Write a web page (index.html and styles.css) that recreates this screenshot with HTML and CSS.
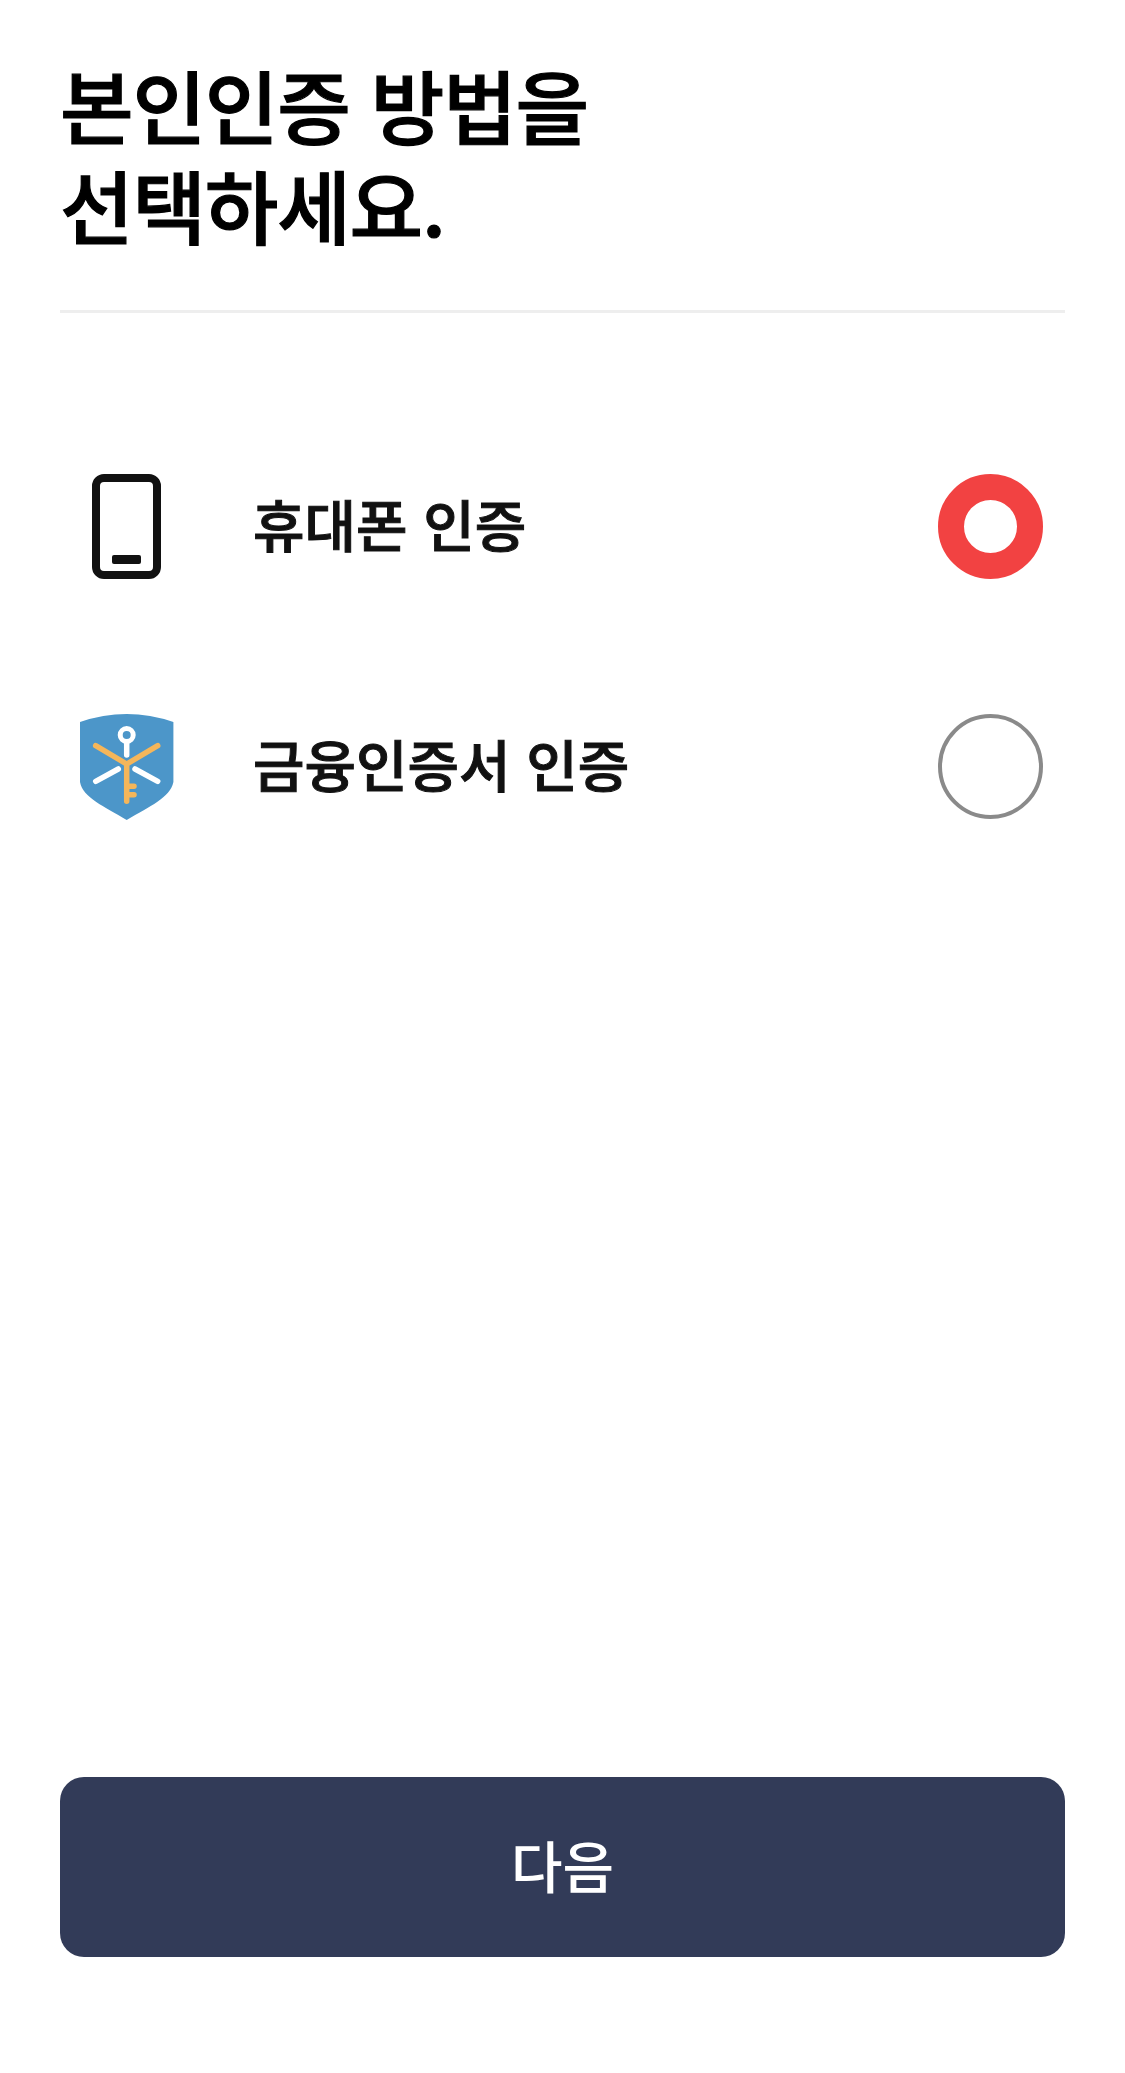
FILE: index.html
```html
<!DOCTYPE html>
<html lang="ko">
<head>
    <title>본인인증</title>
    <meta name="viewport" content="width=device-width, initial-scale=1"/>
    <link rel="stylesheet" href="styles.css">
</head>
<body>
<div class="page">
    <h1 class="title">본인인증 방법을<br>선택하세요.</h1>

    <div class="method-list">
        <div class="method">
            <div class="method-icon">
                <svg width="69" height="105" viewBox="0 0 69 105">
                    <rect x="4" y="4" width="61" height="97" rx="8" fill="#fff" stroke="#111" stroke-width="8"/>
                    <rect x="20" y="81" width="29" height="9" rx="2" fill="#111"/>
                </svg>
            </div>
            <span class="method-name">휴대폰 인증</span>
            <span class="radio radio-on"></span>
        </div>
        <div class="method">
            <div class="method-icon">
                <svg width="94" height="106" viewBox="0 0 94 106" fill="none" stroke-linecap="round">
                    <path d="M0 8Q46.7 -8 93.4 8V68C90 84 70 92 46.7 106C24 92 3 84 0 68Z" fill="#4c96c9"/>
                    <circle cx="46.7" cy="21" r="6.5" stroke="#fff" stroke-width="5"/>
                    <path d="M46.7 28V41M15.7 67.3L38.3 55M55 55L77.7 67.3" stroke="#fff" stroke-width="5.5"/>
                    <path d="M15.7 31.7L46.7 50L77.7 31.7M46.7 50V87.3M46.7 72.3H54M46.7 80.7H54" stroke="#f5b65a" stroke-width="5.5"/>
                </svg>
            </div>
            <span class="method-name">금융인증서 인증</span>
            <span class="radio"></span>
        </div>
    </div>

    <button type="button" class="next-btn">다음</button>
</div>
</body>
</html>
```

FILE: styles.css
```css
body {
    margin: 0;
    background: #fff;
    font-family: "Noto Sans CJK KR", "Noto Sans", sans-serif;
}

.page {
    height: 2073px;
    box-sizing: border-box;
    padding: 53px 60px 116px;
    display: flex;
    flex-direction: column;
}

.title {
    margin: 0;
    padding-bottom: 57px;
    border-bottom: 3px solid #eeeeee;
    font-size: 80px;
    line-height: 100px;
    font-weight: 500;
    letter-spacing: -1.2px;
    -webkit-text-stroke: 1.2px #000;
    color: #000;
}

.method-list {
    padding: 161px 22px 0 0;
    display: flex;
    flex-direction: column;
    gap: 135px;
}

.method {
    display: flex;
    align-items: center;
    height: 105px;
}

.method-icon {
    width: 133px;
    margin-right: 60px;
    display: flex;
    justify-content: center;
}

.method-name {
    flex: 1;
    padding-bottom: 8px;
    font-size: 56px;
    font-weight: 500;
    -webkit-text-stroke: 1px #111;
    color: #111;
}

.radio {
    width: 105px;
    height: 105px;
    box-sizing: border-box;
    border: 4px solid #8a8a8a;
    border-radius: 50%;
}

.radio-on {
    border: 26px solid #f24242;
}

.next-btn {
    margin-top: auto;
    height: 180px;
    padding-bottom: 8px;
    border: none;
    border-radius: 24px;
    background-color: #323b58;
    color: #fff;
    font-family: inherit;
    font-size: 56px;
    font-weight: 500;
}
```
